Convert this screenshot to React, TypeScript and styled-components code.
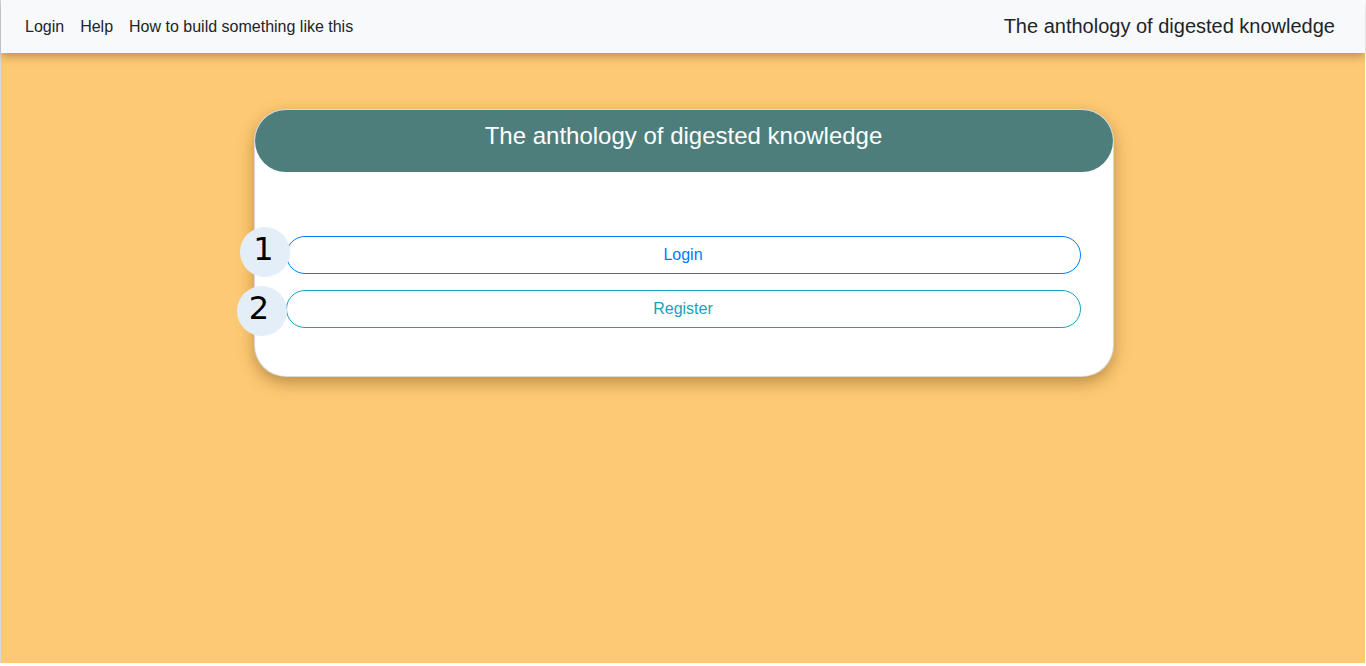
import React from 'react';
import styled, {createGlobalStyle} from 'styled-components';

const GlobalStyle = createGlobalStyle`
    html, body {
        margin: 0;
        padding: 0;
        background: #fff;
    }
    body {
        font-family: "Liberation Sans", Arial, sans-serif;
        color: #212529;
    }
`;

const Page = styled.div`
    width: 1364px;
    height: 663px;
    border-left: 1px solid #d9d9d9;
    background-color: #fec974;
    display: flex;
    flex-direction: column;
`;

const Navbar = styled.nav`
    height: 53px;
    flex-shrink: 0;
    background-color: #f8f9fa;
    box-shadow: 0 4px 8px rgba(0, 0, 0, 0.25);
    display: flex;
    align-items: center;
    justify-content: space-between;
    padding: 0 30px 0 16px;
    position: relative;
    z-index: 1;
`;

const NavLinks = styled.div`
    display: flex;
    align-items: center;
`;

const NavLink = styled.a`
    padding: 8px;
    font-size: 16px;
    line-height: 24px;
    color: #212529;
    text-decoration: none;
    cursor: pointer;
`;

const Brand = styled.span`
    font-size: 20px;
    line-height: 30px;
    color: #212529;
    margin-top: -2px;
`;

const Main = styled.main`
    flex: 1;
    display: flex;
    justify-content: center;
    align-items: flex-start;
    padding-top: 56px;
    padding-left: 1px;
`;

const Card = styled.section`
    width: 858px;
    background: #fff;
    border: 1px solid rgba(0, 0, 0, 0.15);
    border-radius: 32px;
    box-shadow: 0 6px 16px rgba(90, 60, 0, 0.4);
    padding-bottom: 48px;
`;

const CardHeader = styled.header`
    height: 62px;
    background-color: #4d7e7c;
    border-radius: 31px;
    color: #fff;
    font-size: 24px;
    line-height: 28px;
    text-align: center;
    padding-top: 12px;
    box-sizing: border-box;
`;

const Options = styled.div`
    display: flex;
    flex-direction: column;
    gap: 16px;
    padding: 64px 32px 0 31px;
`;

const OptionRow = styled.div`
    position: relative;
`;

const PillButton = styled.button<{$tone: string}>`
    width: 100%;
    height: 38px;
    border: 1px solid ${(p) => p.$tone};
    border-radius: 19px;
    background: #fff;
    color: ${(p) => p.$tone};
    font-family: "Liberation Sans", Arial, sans-serif;
    font-size: 16px;
    cursor: pointer;
`;

const StepBadge = styled.span<{$left: number; $top: number; $indent: number}>`
    position: absolute;
    left: ${(p) => p.$left}px;
    top: ${(p) => p.$top}px;
    width: 50px;
    height: 50px;
    border-radius: 50%;
    background-color: #e4eef9;
    color: #000;
    font-family: "DejaVu Sans", sans-serif;
    font-size: 32px;
    line-height: 44px;
    text-align: center;
    text-indent: ${(p) => p.$indent}px;
`;

const steps = [
    {label: 'Login', tone: '#007bff', left: -46, top: -9, indent: -2},
    {label: 'Register', tone: '#17a2b8', left: -49, top: -4, indent: -5},
];

export default function App() {
    return (
        <>
            <GlobalStyle />
            <Page>
                <Navbar>
                    <NavLinks>
                        <NavLink>Login</NavLink>
                        <NavLink>Help</NavLink>
                        <NavLink>How to build something like this</NavLink>
                    </NavLinks>
                    <Brand>The anthology of digested knowledge</Brand>
                </Navbar>
                <Main>
                    <Card>
                        <CardHeader>The anthology of digested knowledge</CardHeader>
                        <Options>
                            {steps.map((s, i) => (
                                <OptionRow key={s.label}>
                                    <PillButton $tone={s.tone}>{s.label}</PillButton>
                                    <StepBadge $left={s.left} $top={s.top} $indent={s.indent}>
                                        {i + 1}
                                    </StepBadge>
                                </OptionRow>
                            ))}
                        </Options>
                    </Card>
                </Main>
            </Page>
        </>
    );
}
